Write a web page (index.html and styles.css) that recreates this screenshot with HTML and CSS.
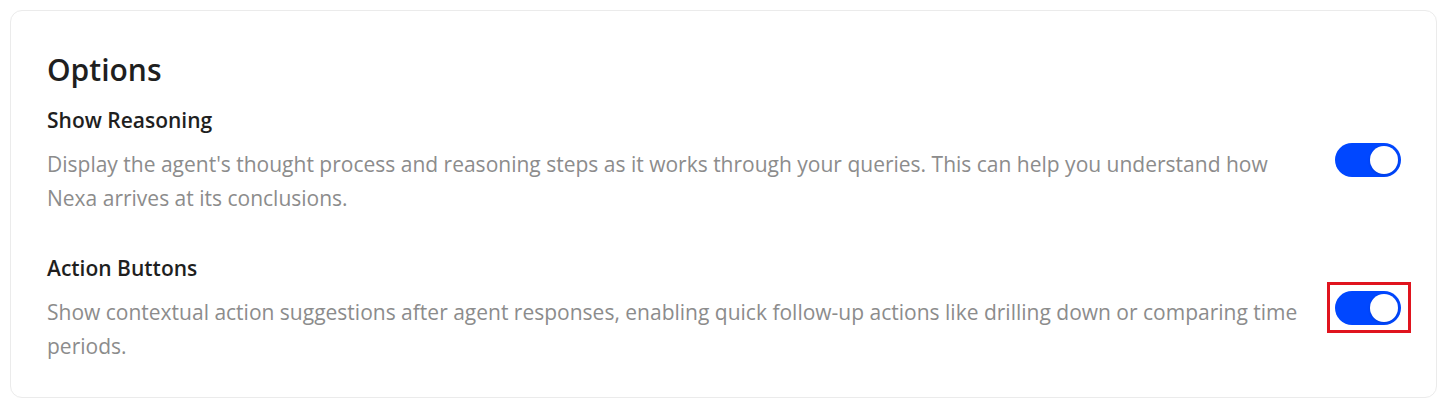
FILE: index.html
```html
<!DOCTYPE html>
<html lang="en">
<head>
<meta charset="utf-8">
<title>Options</title>
<link rel="stylesheet" href="styles.css">
</head>
<body>
<section class="card">
  <h2 class="card-title">Options</h2>
  <div class="option">
    <div class="option-text">
      <h3 class="option-title">Show Reasoning</h3>
      <p class="option-desc">Display the agent's thought process and reasoning steps as it works through your queries. This can help you understand how Nexa arrives at its conclusions.</p>
    </div>
    <button class="toggle is-on" aria-pressed="true"><span class="knob"></span></button>
  </div>
  <div class="option">
    <div class="option-text">
      <h3 class="option-title">Action Buttons</h3>
      <p class="option-desc">Show contextual action suggestions after agent responses, enabling quick follow-up actions like drilling down or comparing time periods.</p>
    </div>
    <button class="toggle is-on is-highlighted" aria-pressed="true"><span class="knob"></span></button>
  </div>
</section>
</body>
</html>
```
FILE: styles.css
```css
* { box-sizing: border-box; }
html, body { margin: 0; background: #ffffff; }
body {
  padding: 10px 8px 6px 10px;
  font-family: "Open Sans", "Noto Sans", sans-serif;
}
.card {
  border: 1px solid #ebebeb;
  border-radius: 12px;
  background: #fff;
  padding: 40px 35px 34px 36px;
  display: flex;
  flex-direction: column;
}
.card-title {
  margin: 0 0 16px;
  font-size: 30px;
  line-height: 38px;
  font-weight: 600;
  color: #1f1f1f;
}
.option {
  display: flex;
  align-items: center;
  gap: 32px;
}
.option + .option { margin-top: 38px; }
.option-text { flex: 1; min-width: 0; }
.option-title {
  margin: 0 0 12px;
  font-size: 21px;
  line-height: 30px;
  font-weight: 600;
  color: #1f1f1f;
}
.option-desc {
  margin: 0;
  font-size: 21px;
  line-height: 34px;
  color: #8c8c8c;
}
.toggle {
  position: relative;
  flex: none;
  width: 66px;
  height: 34px;
  border: none;
  border-radius: 17px;
  padding: 3px;
  background: #d0d0d0;
  display: flex;
  justify-content: flex-start;
  cursor: pointer;
}
.toggle.is-on {
  background: #0047ff;
  justify-content: flex-end;
}
.knob {
  width: 28px;
  height: 28px;
  border-radius: 50%;
  background: #fff;
  box-shadow: 0 1px 3px rgba(0,0,0,0.15);
}
.is-highlighted::after {
  content: "";
  position: absolute;
  top: -9px;
  right: -10px;
  bottom: -8px;
  left: -8px;
  border: 3px solid #e0141e;
  pointer-events: none;
}
```
